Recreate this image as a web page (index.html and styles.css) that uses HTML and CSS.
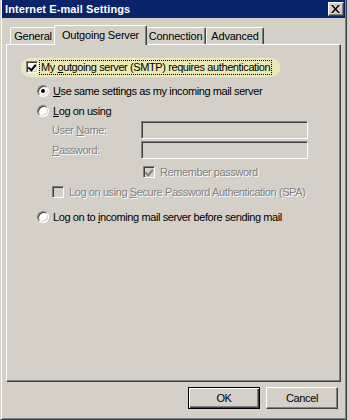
FILE: index.html
```html
<!DOCTYPE html>
<html>
	<head>
		<meta charset="utf-8">
		<title>Internet E-mail Settings</title>
		<link rel="stylesheet" href="styles.css">
	</head>
	<body>
		<div class="window">
			<div class="titlebar">
				<span class="title">Internet E-mail Settings</span>
				<span class="close">
					<svg width="9" height="8" viewBox="0 0 9 8"><path d="M0 0h2l2.5 3 2.5-3h2l-3.5 4 3.5 4h-2l-2.5-3-2.5 3h-2l3.5-4z" fill="#000"/></svg>
				</span>
			</div>
			<div class="content">
				<div class="tabs">
					<div class="tab tab-general">General</div>
					<div class="tab tab-out active">Outgoing Server</div>
					<div class="tab tab-conn">Connection</div>
					<div class="tab tab-adv">Advanced</div>
				</div>
				<div class="panel">
					<div class="row row-auth">
						<div class="pill">
							<span class="check checked"></span>
							<span class="focus">My <u>o</u>utgoing server (SMTP) requires authentication</span>
						</div>
					</div>
					<div class="row row-same">
						<span class="radio on"></span>
						<span class="label"><u>U</u>se same settings as my incoming mail server</span>
					</div>
					<div class="row row-logon">
						<span class="radio"></span>
						<span class="label"><u>L</u>og on using</span>
					</div>
					<div class="row row-user">
						<span class="field-label disabled">User <u>N</u>ame:</span>
						<span class="input"></span>
					</div>
					<div class="row row-pass">
						<span class="field-label disabled"><u>P</u>assword:</span>
						<span class="input"></span>
					</div>
					<div class="row row-remember">
						<span class="check checked off"></span>
						<span class="label disabled">Remember password</span>
					</div>
					<div class="row row-spa">
						<span class="check off"></span>
						<span class="label disabled">Log on using <u>S</u>ecure Password Authentication (SPA)</span>
					</div>
					<div class="row row-before">
						<span class="radio"></span>
						<span class="label">Log on to <u>i</u>ncoming mail server before sending mail</span>
					</div>
				</div>
				<div class="buttons">
					<div class="btn default"><span>OK</span></div>
					<div class="btn"><span>Cancel</span></div>
				</div>
			</div>
		</div>
	</body>
</html>
```
FILE: styles.css
```css
*{
	margin: 0;
	padding: 0;
	box-sizing: border-box;
}
body{
	background: #d4d0c8;
	font-family: "Liberation Sans", Arial, sans-serif;
	font-size: 11px;
	letter-spacing: -0.4px;
	color: #000;
	width: 350px;
	height: 420px;
	overflow: hidden;
	display: flex;
}
.window{
	width: 347px;
	height: 420px;
	flex: none;
	background: #d4d0c8;
	border-left: 1px solid #d4d0c8;
	border-right: 1px solid #404040;
	border-bottom: 1px solid #404040;
	box-shadow: inset 1px 0 #fff, inset -1px -1px #808080;
	display: flex;
	flex-direction: column;
}
.outside{
	flex: 1;
}
.titlebar{
	height: 18px;
	margin: 0 1px 0 1px;
	background: #0a246a;
	display: flex;
	align-items: center;
	justify-content: space-between;
	padding: 0 1px 0 3px;
}
.title{
	color: #fff;
	font-weight: bold;
	font-size: 11px;
	letter-spacing: 0.1px;
}
.close{
	width: 16px;
	height: 14px;
	background: #d4d0c8;
	border-top: 1px solid #fff;
	border-left: 1px solid #fff;
	border-right: 1px solid #404040;
	border-bottom: 1px solid #404040;
	box-shadow: inset -1px -1px #808080;
	display: flex;
	align-items: center;
	justify-content: center;
	padding: 0 1px 1px 0;
}
.close svg{
	display: block;
}
.content{
	flex: 1;
	padding: 7px 5px 0 5px;
	display: flex;
	flex-direction: column;
}

/* tabs */
.tabs{
	display: flex;
	align-items: flex-end;
	padding-left: 4px;
	height: 19px;
}
.tab{
	height: 17px;
	border-top: 1px solid #fff;
	border-left: 1px solid #fff;
	border-right: 1px solid #404040;
	border-top-left-radius: 2px;
	border-top-right-radius: 2px;
	box-shadow: inset -1px 0 #808080;
	text-align: center;
	line-height: 15px;
	padding-top: 1px;
	white-space: nowrap;
	letter-spacing: -0.2px;
}
.tab-general{ width: 46px; }
.tab-out{ width: 89px; }
.tab-conn{ width: 61px; }
.tab-adv{ width: 58px; }
.tab.active{
	height: 20px;
	width: 93px;
	margin: 0 -2px -1px -2px;
	background: #d4d0c8;
	position: relative;
	z-index: 1;
	line-height: 16px;
	padding-top: 1px;
}
.panel{
	height: 338px;
	border-top: 1px solid #fff;
	border-left: 1px solid #fff;
	border-right: 1px solid #404040;
	border-bottom: 1px solid #404040;
	box-shadow: inset -1px -1px #808080;
	padding-top: 13px;
}

/* rows */
.row{
	height: 18px;
	display: flex;
	align-items: center;
	white-space: nowrap;
}
.row-same{ margin-top: 6px; padding-left: 30px; }
.row-logon{ margin-top: 2px; padding-left: 30px; }
.row-user{ margin-top: 1px; padding-left: 45px; }
.row-pass{ margin-top: 2px; padding-left: 45px; }
.row-remember{ margin-top: 4px; padding-left: 136px; }
.row-spa{ margin-top: 2px; padding-left: 45px; }
.row-before{ margin-top: 7px; padding-left: 30px; }
.row-auth{ padding-left: 15px; }

.pill{
	height: 17px;
	width: 257px;
	border-radius: 9px;
	background: #ebe8b4;
	box-shadow: 0 0 1px 1px #efedc8;
	display: flex;
	align-items: center;
	padding-left: 4px;
}
.focus{
	margin-left: 2px;
	outline: 1px dotted #000;
	outline-offset: 0;
	padding: 0 1px;
	line-height: 13px;
}
.label{
	margin-left: 5px;
}
.row-same .label, .row-logon .label, .row-before .label{
	margin-left: 4px;
}
.disabled{
	color: #808080;
	text-shadow: 1px 1px 0 #fff;
}
.field-label{
	width: 89px;
}

/* checkbox */
.check{
	width: 12px;
	height: 12px;
	flex: none;
	background: #fff;
	border-top: 1px solid #808080;
	border-left: 1px solid #808080;
	border-right: 1px solid #fff;
	border-bottom: 1px solid #fff;
	box-shadow: inset 1px 1px #404040, inset -1px -1px #d4d0c8;
	position: relative;
}
.check.off{
	background: #d4d0c8;
}
.check.checked::after{
	content: "";
	position: absolute;
	left: 2px;
	top: 1px;
	width: 3px;
	height: 6px;
	border-right: 2px solid #000;
	border-bottom: 2px solid #000;
	transform: rotate(40deg);
	transform-origin: 60% 60%;
}
.check.checked.off::after{
	border-color: #808080;
}

/* radio */
.radio{
	width: 12px;
	height: 12px;
	flex: none;
	border-radius: 50%;
	background: #fff;
	border: 1px solid;
	border-color: #808080 #fff #fff #808080;
	box-shadow: inset 1px 1px #404040, inset -1px -1px #d4d0c8;
	display: flex;
	align-items: center;
	justify-content: center;
}
.radio.on::after{
	content: "";
	width: 4px;
	height: 4px;
	border-radius: 50%;
	background: #000;
}

/* disabled inputs */
.input{
	width: 167px;
	height: 18px;
	background: #d4d0c8;
	border-top: 1px solid #808080;
	border-left: 1px solid #808080;
	border-right: 1px solid #fff;
	border-bottom: 1px solid #fff;
	box-shadow: inset 1px 1px #404040, inset -1px -1px #d4d0c8;
}

/* buttons */
.buttons{
	display: flex;
	justify-content: flex-end;
	gap: 6px;
	padding: 5px 3px 0 0;
}
.btn{
	width: 72px;
	height: 22px;
	border-top: 1px solid #fff;
	border-left: 1px solid #fff;
	border-right: 1px solid #404040;
	border-bottom: 1px solid #404040;
	box-shadow: inset -1px -1px #808080;
	display: flex;
	align-items: center;
	justify-content: center;
}
.btn.default{
	border: 1px solid #000;
	box-shadow: inset 1px 1px #fff, inset -1px -1px #404040, inset -2px -2px #808080;
}
```
